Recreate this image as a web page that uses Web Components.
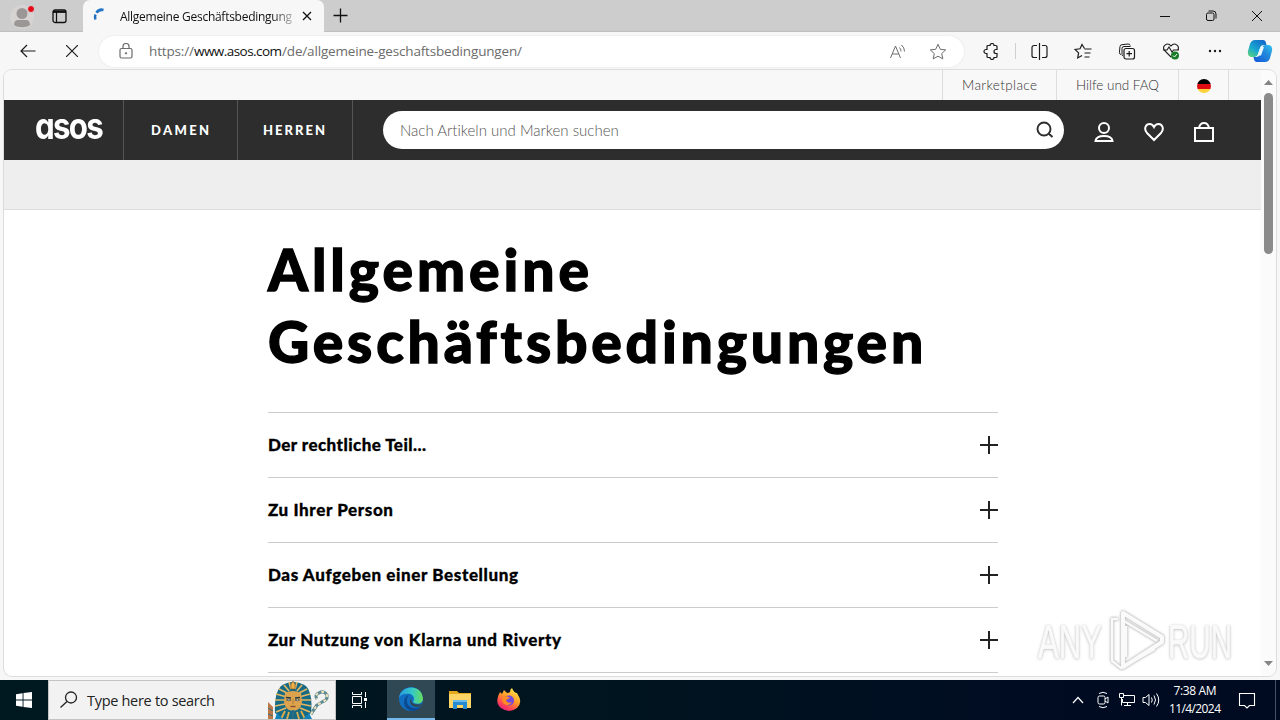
<!DOCTYPE html>
<html lang="de">
<head>
<meta charset="utf-8">
<title>Allgemeine Geschäftsbedingungen</title>
<style>
    html, body { margin: 0; height: 100%; overflow: hidden; }
    body { font-family: "Open Sans", "Noto Sans", sans-serif; }
</style>
</head>
<body>
<desktop-screen></desktop-screen>

<script>
const svg = (w, h, body, extra = '') =>
    `<svg width="${w}" height="${h}" viewBox="0 0 ${w} ${h}" fill="none" stroke="currentColor" ${extra}>${body}</svg>`;

function build(name, html) {
    customElements.define(name, class extends HTMLElement {
        constructor() {
            super();
            this.attachShadow({ mode: 'open' });
            this.shadowRoot.innerHTML = `<style>svg { display: block; flex: none; } * { box-sizing: border-box; }</style>` + html;
        }
    });
}

build('desktop-screen', `
    <style>
    :host { display: flex; flex-direction: column; width: 1280px; height: 720px; background: #f7f7f7; }
    </style>
    <tab-strip></tab-strip>
    <browser-toolbar></browser-toolbar>
    <page-frame></page-frame>
    <task-bar></task-bar>
`);

build('tab-strip', `
    <style>
    :host { display: flex; height: 32px; flex: none; background: #cdcdcd; box-shadow: inset 0 -1px #bfbfbf; color: #111; }
    .left { width: 83px; display: flex; align-items: center; padding-left: 9px; gap: 13px; }
    .left svg + svg { margin-left: 3px; }
    .tab { width: 241px; display: flex; align-items: center; padding: 0 9px 0 10px; background: #f7f7f7; border-radius: 7px 7px 0 0; font-size: 12px; }
    .title { width: 172px; margin-left: 11px; overflow: hidden; -webkit-mask-image: linear-gradient(90deg, #000 88%, rgba(0, 0, 0, .3)); }
    .plus { margin: 8px 0 0 9px; }
    .window { margin-left: auto; display: flex; align-items: center; gap: 34px; padding-right: 17px; }
    </style>
    <div class="left">
        ${svg(27, 30, '<circle cx="13" cy="16" r="12" fill="#d6d4d3" stroke="none"/><circle cx="13" cy="12.500" r="5.500" fill="#9b9795" stroke="none"/><path d="M5 24c0-3.500 1.500-5 4-5h8c2.500 0 4 1.500 4 5c-4 3-12 3-16 0z" fill="#9b9795" stroke="none"/><circle cx="22" cy="8" r="3.500" fill="#e30b17" stroke="#d6d4d3"/>')}
        ${svg(15, 15, '<rect x="1" y="1" width="13" height="12.500" rx="2" stroke-width="1.300"/><path d="M1 2.800h13" stroke-width="2.200"/><path d="M4.500 3v10" stroke-width="1.200"/>')}
    </div>
    <div class="tab">
        ${svg(16, 16, '<path d="M2.500 11.500a7 7 0 0 1 0-5" stroke="#1b6ec2" stroke-width="2.400"/><path d="M3.500 4.800a6.500 6.500 0 0 1 7-2.800" stroke="#2174c6" stroke-width="2.800"/>')}
        <div class="title"><fit-text w="172">Allgemeine Geschäftsbedingung</fit-text></div>
        <svg style="margin-left:10px" width="10" height="10" viewBox="0 0 10 10" stroke="#111" stroke-width="1.300"><path d="M1 1l8 8M9 1l-8 8"/></svg>
    </div>
    <div class="plus">${svg(15, 15, '<path d="M7.500 0.500v14M0.500 7.500h14" stroke-width="1.300"/>')}</div>
    <div class="window">
        ${svg(12, 12, '<path d="M1 6.500h10"/>')}
        ${svg(12, 12, '<rect x="1.500" y="3" width="7.500" height="7.500" rx="1.500"/><path d="M3.500 1h4.500a3 3 0 0 1 3 3v4.500"/>')}
        ${svg(12, 12, '<path d="M1 1l10 10M11 1L1 11"/>')}
    </div>
`);

build('browser-toolbar', `
    <style>
    :host { display: flex; align-items: center; height: 37px; flex: none; color: #1b1b1b; padding: 1px 0 0 20px; }
    .address { display: flex; align-items: center; width: 865px; height: 31px; margin-left: 21px; padding: 0 17px 0 20px; border-radius: 16px; background: #fff; box-shadow: 0 0 2px #ddd; color: #6c6c6c; font-size: 13.500px; }
    .url { display: flex; margin: 0 auto 0 16px; }
    .host { color: #111; }
    .address > svg:last-child { margin-left: 22px; }
    .tools { display: flex; align-items: center; gap: 26px; margin-left: 19px; }
    .tools i { height: 16px; width: 1px; margin: 0 -11px; background: #cfcfcf; }
    .tools svg:last-child { margin-left: -3px; }
    </style>
    ${svg(16, 14, '<path d="M15.500 7H1M7 1L1 7l6 6" stroke-width="1.200"/>')}
    <svg style="margin-left:30px" width="12" height="12" viewBox="0 0 12 12" stroke="#1b1b1b" stroke-width="1.200"><path d="M0 0l12 12M12 0L0 12"/></svg>
    <div class="address">
        ${svg(14, 16, '<rect x="1" y="5.500" width="12" height="9.500" rx="1.500" stroke-width="1.200"/><path d="M4 5.500V3.500a3 3 0 0 1 6 0v2" stroke-width="1.200"/><circle cx="7" cy="10.300" r=".7" fill="currentColor"/>')}
        <div class="url"><fit-text w="45">https://</fit-text><fit-text class="host" w="88">www.asos.com</fit-text><fit-text w="240">/de/allgemeine-geschaftsbedingungen/</fit-text></div>
        ${svg(18, 16, '<path d="M1.500 15L6.500 3L11.500 15M3.200 11h6.600M10.500 4.500q1.500 1.500 1.500 4M12.500 2q3 2.500 3 6.500" />')}
        ${svg(18, 17, '<path d="M9 1.300l2.300 5 5.400.6-4 3.700 1.100 5.300L9 13.200l-4.800 2.700 1.100-5.300-4-3.700 5.400-.6z"/>')}
    </div>
    <div class="tools">
        ${svg(17, 17, '<path d="M5 2.500h2a2 2 0 0 1 4 0h2a1 1 0 0 1 1 1v3h-1a2 2 0 0 0 0 4h1v3a1 1 0 0 1-1 1h-2a2 2 0 0 1-4 0H5a1 1 0 0 1-1-1v-3H3a2 2 0 0 1 0-4h1v-3a1 1 0 0 1 1-1z" stroke-width="1.200"/>')}
        <i></i>
        ${svg(17, 17, '<path d="M6 2.500H3a2 2 0 0 0-2 2v8a2 2 0 0 0 2 2h3M11 2.500h3a2 2 0 0 1 2 2v8a2 2 0 0 1-2 2h-3M8.500 0v17" stroke-width="1.200"/>')}
        ${svg(18, 17, '<path d="M10.500 5.500L8 1.500l-2 4.300-5 .6 3.600 3.500-.9 5L8 12.500M10.500 6h7M10.500 10h6M10.500 14h5" stroke-width="1.200"/>')}
        ${svg(18, 17, '<path d="M3 11.500a2 2 0 0 1-1.600-2.200L2 3.500A2 2 0 0 1 4 1.700l6-.7a2 2 0 0 1 2.200 1.500M5 13a2 2 0 0 1-1-1.700V5.500a2 2 0 0 1 2-2h6.500"/><rect x="6" y="5.500" width="10.500" height="10.500" rx="2" stroke-width="1.200"/><path d="M11.200 8v5.500M8.500 10.700H14" stroke-width="1.200"/>')}
        ${svg(18, 18, '<path d="M9 15L2.500 8.500C-.5 4 5.500-.5 9 4c3.500-4.500 9.500 0 6.500 4.500M1 8h4l2-3 3 5 1.500-2H17" stroke-width="1.100"/><circle cx="13" cy="13.500" r="4" fill="#177b28" stroke="none"/><path d="M11 13.500l1.500 1.500 2.500-3" stroke="#fff"/>')}
        ${svg(18, 16, '<g fill="currentColor" stroke="none"><circle cx="4" cy="8" r="1.200"/><circle cx="9" cy="8" r="1.200"/><circle cx="14" cy="8" r="1.200"/></g>')}
        <svg width="26" height="24" viewBox="0 0 26 24">
            <defs>
                <linearGradient id="a" x1="0" y1="1" x2=".8" y2="0"><stop offset="0" stop-color="#63d873"/><stop offset=".45" stop-color="#18a8d0"/><stop offset="1" stop-color="#1469c9"/></linearGradient>
                <linearGradient id="b" x1="0" y1="1" x2="1" y2="0"><stop offset="0" stop-color="#1257d8"/><stop offset=".6" stop-color="#2389dc"/><stop offset="1" stop-color="#33c7f0"/></linearGradient>
            </defs>
            <path d="M8 1h8q2.500 0 3 3l.5 2h-3q-2.500 0-3.500 3l-2 6q-1 3-4 3H4q-4-1-3-6l2-7q1.500-4 5-4z" fill="url(#a)"/>
            <path d="M18 6h4q4 1 3 6l-2 7q-1 4-5 4h-8q-3 0-3.500-5H10q2 0 3-3l2-6q1-3 3-3z" fill="url(#b)"/>
            <path d="M13.500 8h3.500l-3 8.500h-3.500z" fill="#e8f7fb"/>
        </svg>
    </div>
`);

build('page-frame', `
    <style>
    :host { display: flex; height: 611px; flex: none; padding: 1px 4px 4px 4px; }
    .frame { display: flex; width: 1272px; height: 606px; overflow: hidden; border-radius: 8px; background: #fff; box-shadow: 0 0 0 1px #ddd; }
    .page { display: flex; flex-direction: column; width: 1257px; }
    .promo { height: 50px; flex: none; background: #eee; border-bottom: 1px solid #ddd; }
    .scroll { width: 15px; display: flex; flex-direction: column; align-items: center; padding: 10px 0; background: #fbfbfb; }
    .scroll i { width: 9px; height: 161px; margin: 8px 0 auto; border-radius: 5px; background: #8b8b8b; }
    .scroll svg { fill: #858585; }
    </style>
    <div class="frame">
        <div class="page">
            <utility-links></utility-links>
            <shop-header></shop-header>
            <div class="promo"></div>
            <terms-article></terms-article>
        </div>
        <div class="scroll">
            <svg width="9" height="5"><path d="M0 5L4.500 0L9 5z"/></svg>
            <i></i>
            <svg width="9" height="5"><path d="M0 0L4.500 5L9 0z"/></svg>
        </div>
    </div>
`);

build('utility-links', `
    <style>
    :host { display: flex; justify-content: flex-end; height: 30px; flex: none; padding-right: 32px; background: #f8f8f8; font: 300 13.500px/30px Lato, sans-serif; color: #333; }
    div { border-left: 1px solid #ddd; padding: 0 19px; }
    .flag { width: 51px; border-right: 1px solid #ddd; padding: 9px 0 0 18px; }
    .flag svg { border-radius: 50%; }
    </style>
    <div><fit-text w="75">Marketplace</fit-text></div>
    <div><fit-text w="83">Hilfe und FAQ</fit-text></div>
    <div class="flag"><svg width="14" height="14"><path d="M0 0h14v5H0z"/><path d="M0 5h14v5H0z" fill="#df0b12"/><path d="M0 10h14v4H0z" fill="#fbd23b"/></svg></div>
`);

build('shop-header', `
    <style>
    :host { display: flex; align-items: center; height: 60px; flex: none; background: #2d2d2d; color: #fff; }
    .logo { width: 119px; height: 60px; padding-left: 31px; font: 700 36px/52px Inter, sans-serif; font-feature-settings: "cv11"; letter-spacing: -2px; }
    .link { height: 60px; border-left: 1px solid #555; width: 114px; padding-left: 27px; font: 900 13px/60px Lato, sans-serif; }
    .link + .link { width: 115px; padding-left: 25px; }
    .search { display: flex; align-items: center; justify-content: space-between; width: 681px; height: 38px; margin-left: 30px; border-radius: 19px; padding: 0 10px 0 17px; background: #fff; color: #555; font: 300 15px/38px Lato, sans-serif; }
    .search svg { color: #2d2d2d; }
    .end { border-left: 1px solid #555; height: 60px; display: flex; align-items: center; }
    .icons { display: flex; gap: 30px; margin: 3px 0 0 30px; }
    </style>
    <div class="logo"><fit-text w="67" squeeze>asos</fit-text></div>
    <div class="link"><fit-text w="58">DAMEN</fit-text></div>
    <div class="link"><fit-text w="62">HERREN</fit-text></div>
    <div class="end">
        <div class="search"><fit-text w="219">Nach Artikeln und Marken suchen</fit-text>
            ${svg(18, 18, '<circle cx="8" cy="8" r="6.500" stroke-width="1.900"/><path d="M12.500 12.500l4 3.500" stroke-width="2"/>')}
        </div>
        <div class="icons">
            ${svg(20, 20, '<circle cx="10" cy="6" r="5" stroke-width="2"/><path d="M1.500 19q.7-5 8.500-5t8.500 5z" stroke-width="2"/>')}
            ${svg(20, 20, '<path d="M10 18L3 11C-1 6 2.500 2 5.500 2Q8.500 2 10 5Q11.500 2 14.500 2C17.500 2 21 6 17 11z" stroke-width="2"/>')}
            ${svg(20, 20, '<path d="M1 6h18v13H1zM5 6q1-5 5-5t5 5" stroke-width="2"/>')}
        </div>
    </div>
`);

build('terms-article', `
    <style>
    :host { display: block; width: 730px; margin-left: 264px; padding-top: 23px; font-family: Lato, sans-serif; color: #000; }
    h1 { display: flex; flex-direction: column; margin: 0 0 35px; font: 900 57px/72px Lato, sans-serif; -webkit-text-stroke: 1.300px #000; }
    .list { border-bottom: 1px solid #ccc; }
    </style>
    <h1><fit-text w="321">Allgemeine</fit-text><fit-text w="654">Geschäftsbedingungen</fit-text></h1>
    <div class="list">
        <terms-row><fit-text w="158">Der rechtliche Teil...</fit-text></terms-row>
        <terms-row><fit-text w="125">Zu Ihrer Person</fit-text></terms-row>
        <terms-row><fit-text w="250">Das Aufgeben einer Bestellung</fit-text></terms-row>
        <terms-row><fit-text w="293">Zur Nutzung von Klarna und Riverty</fit-text></terms-row>
    </div>
`);

build('terms-row', `
    <style>
    :host { display: flex; align-items: center; justify-content: space-between; box-sizing: border-box; height: 65px; border-top: 1px solid #ccc; font-size: 17px; font-weight: 900; }
    ::slotted(fit-text) { padding-bottom: 2px; -webkit-text-stroke: .3px #000; }
    </style>
    <slot></slot>
    ${svg(18, 18, '<path d="M9 0v18M0 9h18" stroke-width="2"/>', 'style="color:#222"')}
`);

build('task-bar', `
    <style>
    :host { display: flex; height: 40px; flex: none; color: #fff; background: linear-gradient(90deg, #001820, #00141f 50%, #000c22 80%, #000a20); }
    .cell { width: 49px; display: flex; align-items: center; justify-content: center; }
    .start { width: 48px; }
    .search { display: flex; align-items: center; width: 288px; background: #f2f2f2; border: 1px solid #c4c4c4; padding-left: 11px; color: #222; font-size: 14.500px; }
    .search fit-text { margin-left: 9px; }
    .search .pharaoh { margin-left: 52px; }
    .task { width: 51px; padding-right: 3px; }
    .active { width: 48px; background: #304754; border-bottom: 2px solid #76b9ed; }
    .tray { margin-left: auto; display: flex; align-items: center; padding-right: 4px; }
    .clock { display: flex; flex-direction: column; align-items: center; margin: 0 17px 0 9px; font: 12px/18px "Open Sans", sans-serif; }
    .edge { width: 1px; height: 40px; margin-left: 19px; background: #4a5163; }
    </style>
    <div class="cell start">${svg(16, 16, '<path fill="#fff" stroke="none" d="M0 2.200L6.600 1.300v6.300H0zM7.500 1.100L16 0v7.600H7.500zM0 8.500h6.600v6.300L0 13.800zM7.500 8.500H16V16l-8.500-1.100z"/>')}</div>
    <div class="search">
        ${svg(18, 18, '<circle cx="11" cy="6.500" r="5.500" stroke-width="1.300"/><path d="M7 10.500L.5 16.500" stroke-width="1.300"/>')}
        <fit-text w="128">Type here to search</fit-text>
        <svg class="pharaoh" width="64" height="38" viewBox="0 0 64 38">
            <path d="M1 38V21l5 5v12" fill="#bd7847"/><path d="M1 27l5 3M1 33l5 2" stroke="#356c79"/>
            <path d="M8 32Q7 12 14 5Q26-3 39 5Q46 12 44 32l-8 6H16z" fill="#176a83"/>
            <path d="M9 31l10-4M8 25l10-2M8 19l10 0M9 13l9 2.500M12 8l8 4M17 4l5 6M22 1l2 7M43 31l-10-4M44 25l-10-2M44 19l-10 0M43 13l-9 2.500M40 8l-8 4M35 4l-5 6M30 1l-2 7" stroke="#e2b765" stroke-width="1.700"/>
            <path d="M18 12q8-4 16 0l1 9q-1 6-5 8l-4 1-4-1q-4-2-5-8z" fill="#dba34e"/>
            <path d="M19 16.500l5 .5M28 17l5-.5" stroke="#273f43" stroke-width="1.500"/><path d="M19.500 19q2.500-2 4.500 0-2 1.500-4.500 0M28 19q2.500-2 4.500 0-2 1.500-4.500 0" fill="#fff" stroke="#24383d" stroke-width=".7"/>
            <path d="M23.500 25.500h5" stroke="#8c4c2b" stroke-width="1.400"/><path d="M25 29h2v9h-2z" fill="#2c6d83"/>
            <path d="M26 18v5" stroke="#b67a34"/><path d="M24 3l2-3 2 3v5h-4z" fill="#efb142" stroke="#765038" stroke-width=".6"/>
            <path d="M18 30l-4 8M34 30l4 8M22 31l-2 7M30 31l2 7" stroke="#dfad4c" stroke-width="1.800"/><path d="M8 38l2-6 6 6M36 38l6-6 3 6" fill="#1482ba"/>
            <path d="M44 33l6-9" fill="none" stroke="#47707b" stroke-width="3"/><path d="M44 33l6-9 5-3q6-2 5-7-3-5-8-2-5 2-2 6" fill="none" stroke="#5c8992" stroke-width="3"/><path d="M44 33l6-9 5-3q6-2 5-7-3-5-8-2-5 2-2 6" fill="none" stroke="#efe2b8" stroke-width="2" stroke-dasharray="3 3"/>
        </svg>
    </div>
    <div class="cell task">${svg(18, 18, '<path d="M1.500 1v2.500h9V1M1.500 17v-2.500h9V17M1.500 5.500h9v7h-9zM14.500 1v5M14.500 11v6"/><path d="M13 7h3v3h-3z" fill="#fff" stroke="none"/>')}</div>
    <div class="cell active">
        <svg width="26" height="26" viewBox="0 0 26 26">
            <defs><linearGradient id="g" x1="0" x2="1"><stop offset="0" stop-color="#2799df"/><stop offset=".55" stop-color="#35c8c8"/><stop offset="1" stop-color="#68de5b"/></linearGradient></defs>
            <circle cx="13" cy="13" r="12" fill="#116dc0"/>
            <path d="M1 12C2-1 24-3 25 13c0 4-5 6-9 4-2-1 0-2 0-4 0-4-4-6-8-5-4 0-6 2-7 4z" fill="url(#g)"/>
            <path d="M11 9c-5 5-1 13 6 13 3 0 5-1 6-2-3 5-8 6-12 4C4 21 5 10 11 9z" fill="#0c4b91"/>
            <path d="M15 10.500c-3 2-3 8 5 8q3 0 4-1l-2 3q-9 2-10-5 0-3 3-5z" fill="#304754"/>
        </svg>
    </div>
    <div class="cell"><svg width="24" height="22" viewBox="0 0 24 22"><path d="M1 2h8l2 2h12v15H1z" fill="#e5a91c"/><path d="M1 5h22v14H1z" fill="#ffd566"/><path d="M5 12h14v8h-4v-4H9v4H5z" fill="#268bd2"/><path d="M5 11h14v2H5z" fill="#6bbae8"/></svg></div>
    <div class="cell"><svg width="24" height="24" viewBox="0 0 24 24">
        <defs><linearGradient id="f" x1=".8" y1="0" x2=".2" y2="1"><stop offset="0" stop-color="#fff04d"/><stop offset=".45" stop-color="#ff9929"/><stop offset=".75" stop-color="#ff4554"/><stop offset="1" stop-color="#e01686"/></linearGradient></defs>
        <path d="M3 4l2 2 2-4 3 3q2 0 3-1 0-3 2-4 2 5 5 5l1 2q5 7-1 13-8 6-16 0Q-3 14 3 4z" fill="url(#f)"/><circle cx="12" cy="12.500" r="5" fill="#7149dc"/><path d="M6 9q4-2 7 1l-4 2q1 4 6 2-3 5-8 2-3-3-1-7z" fill="#ff8c25"/>
    </svg></div>
    <div class="tray">
        ${svg(12, 8, '<path d="M1 7l5-5.500L11 7" stroke-width="1.200"/>')}
        <svg style="margin-left:12px" width="14" height="18" viewBox="0 0 14 18" fill="none" stroke="#fff"><rect x="2" y="5" width="7" height="8" rx="1.500"/><path d="M9 8l3-2v6l-3-2M3 2.500q4-2.500 8 0M3 15.500q4 2.500 8 0"/></svg>
        <svg style="margin-left:8px" width="18" height="16" viewBox="0 0 18 16" fill="none" stroke="#fff"><path d="M6 3.500h10.500v7H4.500V7M6 13.500h7M9.500 10.500v3M1.500 1.500h4v4h-4zM3.500 5.500v8"/></svg>
        <svg style="margin-left:6px" width="18" height="16" viewBox="0 0 18 16" fill="none" stroke="#fff"><path d="M1 5.500h2.500L7 2.500v11l-3.500-3H1zM9.500 5.500q1.500 2.500 0 5M12 3.500q3 4.500 0 9M14.500 1.500q4.500 6.500 0 13"/></svg>
        <div class="clock"><fit-text w="43">7:38 AM</fit-text><fit-text w="52">11/4/2024</fit-text></div>
        ${svg(18, 18, '<path d="M1.500 2.500h15v12h-5L9 17l-2.500-2.500h-5z" stroke-width="1.100"/>')}
        <div class="edge"></div>
    </div>
    <run-watermark></run-watermark>
`);

// Overlay in the corner of the recorded screen.
build('run-watermark', `
    <style>
    :host { position: absolute; left: 1038px; top: 609px; display: flex; align-items: center; width: 198px; height: 64px; color: #fafafa; font: 400 49px/64px "Liberation Sans", sans-serif; -webkit-text-stroke: 1px #f8f8f8; text-shadow: 0 0 2px #bbb, 0 1px 4px #bbb; }
    svg { margin: 0 4px 0 6px; filter: drop-shadow(0 0 1px #bbb) drop-shadow(0 0 1px #ccc); }
    </style>
    <fit-text w="64" squeeze>ANY</fit-text>
    ${svg(56, 64, '<path d="M15 4L54 28v5L15 58z" stroke-width="4" stroke-linejoin="round"/><path d="M10 10H4v42l9 7 34-19M16 12l33 20M18 48V17" stroke-width="2.500"/>')}
    <fit-text w="64" squeeze>RUN</fit-text>
`);

// Spreads its text over the given width, by tracking or by squeezing the letters.
class FitText extends HTMLElement {
    constructor() {
        super();
        this.attachShadow({ mode: 'open' });
        this.shadowRoot.innerHTML = `
            <style>
            :host { display: block; flex: none; white-space: nowrap; }
            span { display: inline-block; transform-origin: 0 50%; }
            </style>
            <span><slot></slot></span>
        `;
    }

    connectedCallback() {
        const target = Number(this.getAttribute('w'));
        const span = this.shadowRoot.querySelector('span');
        const natural = span.getBoundingClientRect().width;
        this.style.width = target + 'px';
        if (this.hasAttribute('squeeze')) {
            span.style.transform = `scaleX(${target / natural})`;
        } else {
            span.style.letterSpacing = (target - natural) / (this.textContent.length - 1) + 'px';
        }
    }
}

customElements.define('fit-text', FitText);
</script>
</body>
</html>
